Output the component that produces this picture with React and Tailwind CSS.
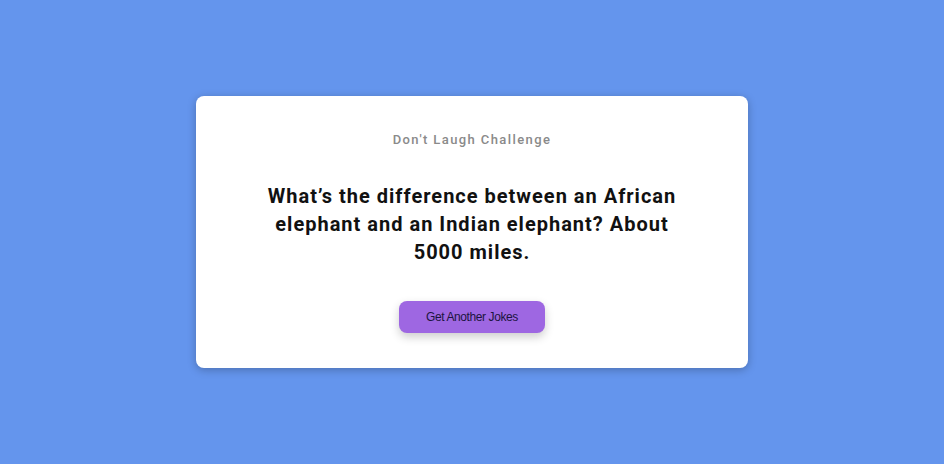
export default function App() {
  return (
    <div className="min-h-screen w-full flex items-center justify-center bg-[#6495ed] font-['Roboto',sans-serif]">
      <div className="w-[552px] rounded-lg bg-white shadow-[0_2px_8px_rgba(0,0,0,0.25)] flex flex-col items-center pt-[34px] pb-[35px]">
        <div className="text-[13px] leading-[20px] font-medium tracking-[1.4px] text-[#8a8a8a]">Don't Laugh Challenge</div>
        <div className="mt-[32px] w-[430px] text-center text-[20px] leading-[28px] font-bold tracking-[1px] text-[#111]">
          What’s the difference between an African elephant and an Indian elephant? About 5000 miles.
        </div>
        <button className="mt-[35px] w-[146px] h-[32px] rounded-lg bg-[#9e67e2] text-[12px] tracking-[-0.4px] text-[#1c1440] shadow-[0_4px_10px_rgba(0,0,0,0.2)] font-['Liberation_Sans',Arial,sans-serif]">
          Get Another Jokes
        </button>
      </div>
    </div>
  );
}
